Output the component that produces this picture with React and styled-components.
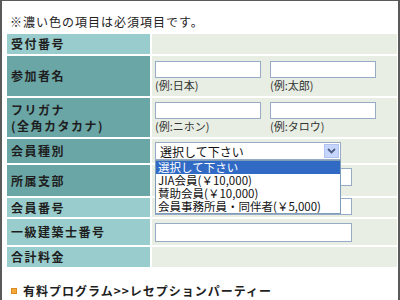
import React from 'react';
import styled, { createGlobalStyle } from 'styled-components';

const GlobalStyle = createGlobalStyle`
  body {
    margin: 0;
    background: #ffffff;
    font-family: 'Noto Sans CJK JP', 'Noto Sans', sans-serif;
  }
`;

const Frame = styled.div`
  width: 400px;
  height: 300px;
  box-sizing: border-box;
  border-top: 1px solid #5a5a5a;
  border-left: 2px solid #5a5a5a;
  border-right: 2px solid #5a5a5a;
  padding-left: 5px;
  overflow: hidden;
  background: #ffffff;
`;

const Notice = styled.div`
  margin: 14px 0 5px 3px;
  font-size: 12px;
  line-height: 14px;
  letter-spacing: 1px;
  color: #222222;
`;

const FormGrid = styled.div`
  display: grid;
  grid-template-columns: 143px 245px;
  grid-template-rows: 20px 40px 39px 24px 31px 19px 26px 20px;
  gap: 2px;
`;

const LabelCell = styled.div`
  display: flex;
  flex-direction: column;
  justify-content: center;
  padding-left: 4px;
  background: ${props => (props.required ? '#6ba6a6' : '#99cccc')};
  font-size: 12px;
  font-weight: 700;
  line-height: 16px;
  letter-spacing: 1.5px;
  color: #1e1e1e;
`;

const ValueCell = styled.div`
  position: relative;
  display: flex;
  align-items: flex-start;
  gap: 9px;
  padding: ${props => props.top || 0}px 0 0 3px;
  background: #e8eee4;
`;

const Field = styled.div`
  display: flex;
  flex-direction: column;
`;

const TextInput = styled.div`
  width: ${props => props.width}px;
  height: ${props => props.height || 17}px;
  box-sizing: border-box;
  border: 1px solid #98abc6;
  background: #ffffff;
`;

const Hint = styled.span`
  margin-top: 1px;
  font-size: 11px;
  line-height: 12px;
  color: #333333;
`;

const Select = styled.div`
  position: relative;
  width: 186px;
  height: 18px;
  box-sizing: border-box;
  border: 1px solid #98abc6;
  background: #ffffff;
  display: flex;
  align-items: center;
  justify-content: space-between;
  padding-left: 4px;
  font-size: 12px;
  color: #111111;
  z-index: 2;
`;

const ArrowButton = styled.span`
  width: 15px;
  height: 14px;
  margin-right: 1px;
  background: #c6d5fb;
  border: 1px solid #b0c2ef;
  box-sizing: border-box;
  display: flex;
  align-items: center;
  justify-content: center;
`;

const DropList = styled.ul`
  position: absolute;
  top: 17px;
  left: -1px;
  width: 186px;
  margin: 0;
  padding: 0;
  list-style: none;
  box-sizing: border-box;
  border: 1px solid #7f9db9;
  background: #ffffff;
`;

const Option = styled.li`
  height: 13px;
  line-height: 13px;
  padding-left: 2px;
  font-size: 11.5px;
  white-space: nowrap;
  color: ${props => (props.active ? '#ffffff' : '#111111')};
  background: ${props => (props.active ? '#316ac5' : 'transparent')};
`;

const Heading = styled.div`
  display: flex;
  align-items: center;
  gap: 6px;
  margin: 17px 0 0 4px;
  font-size: 12px;
  font-weight: 700;
  line-height: 14px;
  letter-spacing: 1px;
  color: #1e1e1e;
`;

const Marker = styled.span`
  width: 6px;
  height: 6px;
  box-sizing: border-box;
  background: #f5a93c;
  border: 1px solid #dc8a1e;
`;

const options = [
  '選択して下さい',
  'JIA会員(￥10,000)',
  '賛助会員(￥10,000)',
  '会員事務所員・同伴者(￥5,000)'
];

const App = () => (
  <Frame>
    <GlobalStyle />
    <Notice>※濃い色の項目は必須項目です。</Notice>
    <FormGrid>
      <LabelCell>受付番号</LabelCell>
      <ValueCell />

      <LabelCell required>参加者名</LabelCell>
      <ValueCell top={5}>
        <Field>
          <TextInput width={106} />
          <Hint>(例:日本)</Hint>
        </Field>
        <Field>
          <TextInput width={106} />
          <Hint>(例:太郎)</Hint>
        </Field>
      </ValueCell>

      <LabelCell required>
        <span>フリガナ</span>
        <span>(全角カタカナ)</span>
      </LabelCell>
      <ValueCell top={4}>
        <Field>
          <TextInput width={106} />
          <Hint>(例:ニホン)</Hint>
        </Field>
        <Field>
          <TextInput width={106} />
          <Hint>(例:タロウ)</Hint>
        </Field>
      </ValueCell>

      <LabelCell required>会員種別</LabelCell>
      <ValueCell top={3}>
        <Select>
          <span>選択して下さい</span>
          <ArrowButton>
            <svg width="9" height="6" viewBox="0 0 9 6">
              <path d="M1 1 L4.5 4.5 L8 1" fill="none" stroke="#4a5d80" strokeWidth="1.8" />
            </svg>
          </ArrowButton>
          <DropList>
            {options.map((o, i) => (
              <Option key={o} active={i === 0}>{o}</Option>
            ))}
          </DropList>
        </Select>
      </ValueCell>

      <LabelCell required>所属支部</LabelCell>
      <ValueCell top={3}>
        <TextInput width={197} height={18} />
      </ValueCell>

      <LabelCell>会員番号</LabelCell>
      <ValueCell top={0}>
        <TextInput width={197} height={17} />
      </ValueCell>

      <LabelCell>一級建築士番号</LabelCell>
      <ValueCell top={4}>
        <TextInput width={197} height={19} />
      </ValueCell>

      <LabelCell>合計料金</LabelCell>
      <ValueCell />
    </FormGrid>
    <Heading>
      <Marker />
      <span>有料プログラム&gt;&gt;レセプションパーティー</span>
    </Heading>
  </Frame>
);

export default App;
